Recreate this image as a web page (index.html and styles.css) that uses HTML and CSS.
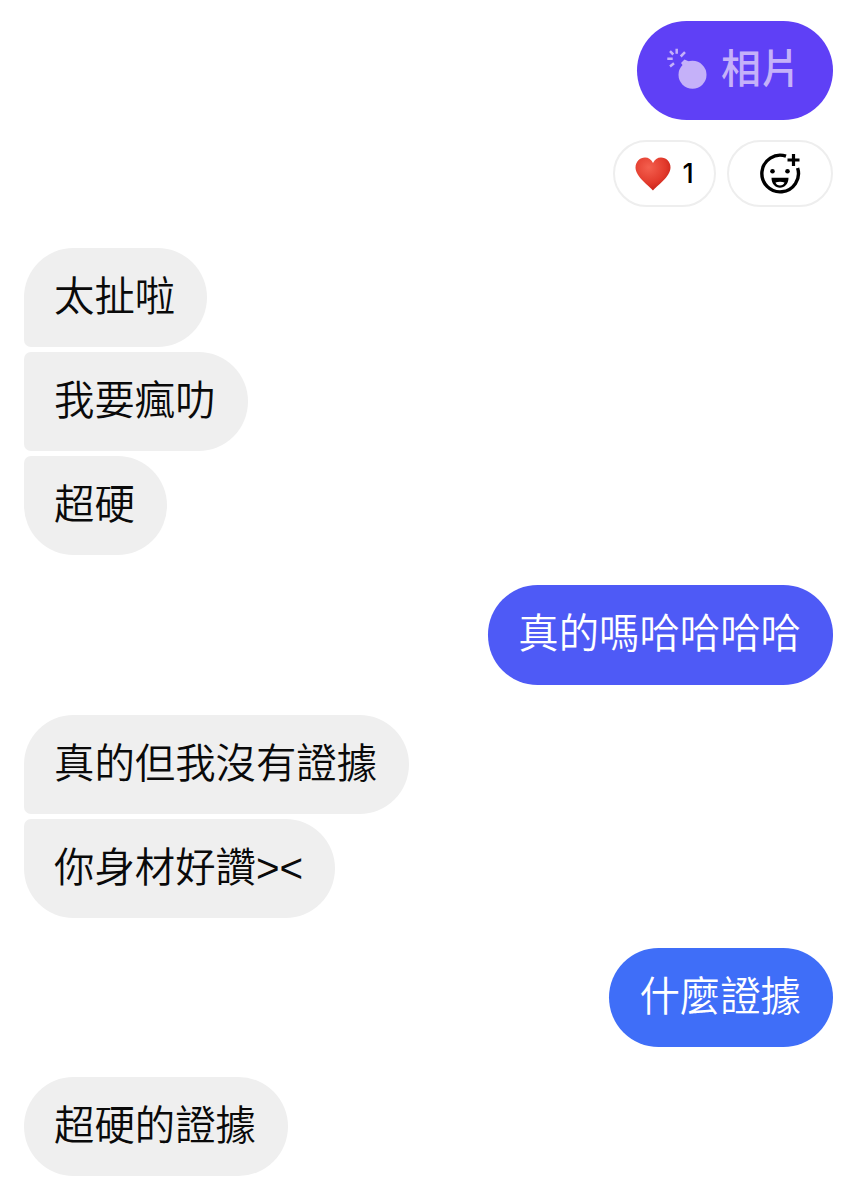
FILE: index.html
```html
<!DOCTYPE html>
<html lang="zh-Hant">
<head>
<meta charset="utf-8">
<title>Chat</title>
<link rel="stylesheet" href="styles.css">
</head>
<body>
<main class="chat">
  <section class="group mine first">
    <div class="bubble sent photo">
      <svg class="bomb" width="42" height="42" viewBox="0 0 42 42" aria-hidden="true">
        <circle cx="25.500" cy="24.800" r="14" fill="#c5b1f9"/>
        <path d="M17.500 9.500L22 11.500L17 17L14 13Z" fill="#c5b1f9"/>
        <path d="M3 1.200L6.300 4.500M9.700 -1.200V3.800M18 2.200L13.700 6.500M0.300 8.800H5.700M3 16.500L7 13.200" stroke="#c5b1f9" stroke-width="2.500" fill="none"/>
      </svg>
      <span class="photo-label">相片</span>
    </div>
    <div class="reactions">
      <div class="chip heart-chip">
        <svg class="heart" width="36" height="34" viewBox="0 0 36 34" aria-hidden="true">
          <defs>
            <radialGradient id="heartFill" cx="0.380" cy="0.300" r="0.800">
              <stop offset="0" stop-color="#f4604f"/>
              <stop offset="0.600" stop-color="#e23a2c"/>
              <stop offset="1" stop-color="#bd1a12"/>
            </radialGradient>
          </defs>
          <path d="M18 33.500C15 29.500 0.500 20 0.500 10.500C0.500 4.500 5 0.500 10 0.500C13.500 0.500 16.500 2.500 18 6C19.500 2.500 22.500 0.500 26 0.500C31 0.500 35.500 4.500 35.500 10.500C35.500 20 21 29.500 18 33.500Z" fill="url(#heartFill)"/>
        </svg>
        <span class="count">1</span>
      </div>
      <div class="chip add-chip">
        <svg class="face" width="44" height="44" viewBox="0 0 44 44" aria-hidden="true">
          <path d="M29 4.200A18.300 18.300 0 1 0 40.600 16" fill="none" stroke="#000" stroke-width="3.400"/>
          <path d="M36.500 2V14M30.500 8H42.500" stroke="#000" stroke-width="3.200"/>
          <circle cx="15.500" cy="19.200" r="2.300"/>
          <circle cx="30.500" cy="19.200" r="2.300"/>
          <path d="M14.500 25.800H31.500C31.500 32 27.500 35.800 23 35.800S14.500 32 14.500 25.800Z M18.500 30.500C19 32.500 21 33.500 23 33.500S27 32.500 27.500 30.500C25 29.500 21 29.500 18.500 30.500Z" fill-rule="evenodd"/>
        </svg>
      </div>
    </div>
  </section>

  <section class="group theirs">
    <div class="bubble received top">太扯啦</div>
    <div class="bubble received middle">我要瘋叻</div>
    <div class="bubble received bottom">超硬</div>
  </section>

  <section class="group mine">
    <div class="bubble sent indigo">真的嗎哈哈哈哈</div>
  </section>

  <section class="group theirs">
    <div class="bubble received top">真的但我沒有證據</div>
    <div class="bubble received bottom">你身材好讚&gt;&lt;</div>
  </section>

  <section class="group mine">
    <div class="bubble sent blue">什麼證據</div>
  </section>

  <section class="group theirs">
    <div class="bubble received">超硬的證據</div>
  </section>
</main>
</body>
</html>
```
FILE: styles.css
```css
html, body {
  margin: 0;
  padding: 0;
  background: #fff;
}

body {
  font-family: "Liberation Sans", "Noto Sans CJK TC", sans-serif;
  overflow: hidden;
}

.chat {
  display: flex;
  flex-direction: column;
  gap: 30px;
  padding: 21px 19px 0 24px;
}

.group {
  display: flex;
  flex-direction: column;
  gap: 4.900px;
}

.mine {
  align-items: flex-end;
}

.theirs {
  align-items: flex-start;
}

.first {
  margin-bottom: 11px;
}

.bubble {
  box-sizing: border-box;
  height: 99.200px;
  display: flex;
  align-items: center;
  padding: 0 32px 1px 30px;
  border-radius: 49.600px;
  font-size: 40.400px;
  font-weight: 350;
  line-height: 1;
  white-space: nowrap;
}

.received {
  background: #efefef;
  color: #0a0a0a;
}

.received.top {
  border-bottom-left-radius: 7px;
}

.received.middle {
  border-top-left-radius: 7px;
  border-bottom-left-radius: 7px;
}

.received.bottom {
  border-top-left-radius: 7px;
}

.sent {
  color: #fff;
}

.photo {
  background: #5f40f6;
  width: 196px;
  padding: 0 0 0 30px;
  gap: 12px;
}

.bomb {
  flex: none;
  overflow: visible;
}

.photo-label {
  color: #c5b1f9;
  font-weight: 500;
  font-size: 40px;
  padding-bottom: 3px;
}

.indigo {
  background: #4e5af6;
}

.blue {
  background: #3f6ef8;
}

.reactions {
  display: flex;
  gap: 11px;
  margin-top: 15px;
}

.chip {
  box-sizing: border-box;
  height: 67px;
  border: 2px solid #eeeeee;
  border-radius: 33.500px;
  background: #fff;
  display: flex;
  align-items: center;
  justify-content: center;
}

.heart-chip {
  width: 103px;
  gap: 11px;
}

.add-chip {
  width: 106px;
}

.heart {
  flex: none;
}

.face {
  flex: none;
  margin-right: 2px;
}

.count {
  font-family: "Inter", "Liberation Sans", sans-serif;
  font-size: 27px;
  font-weight: 500;
  color: #000;
}
```
